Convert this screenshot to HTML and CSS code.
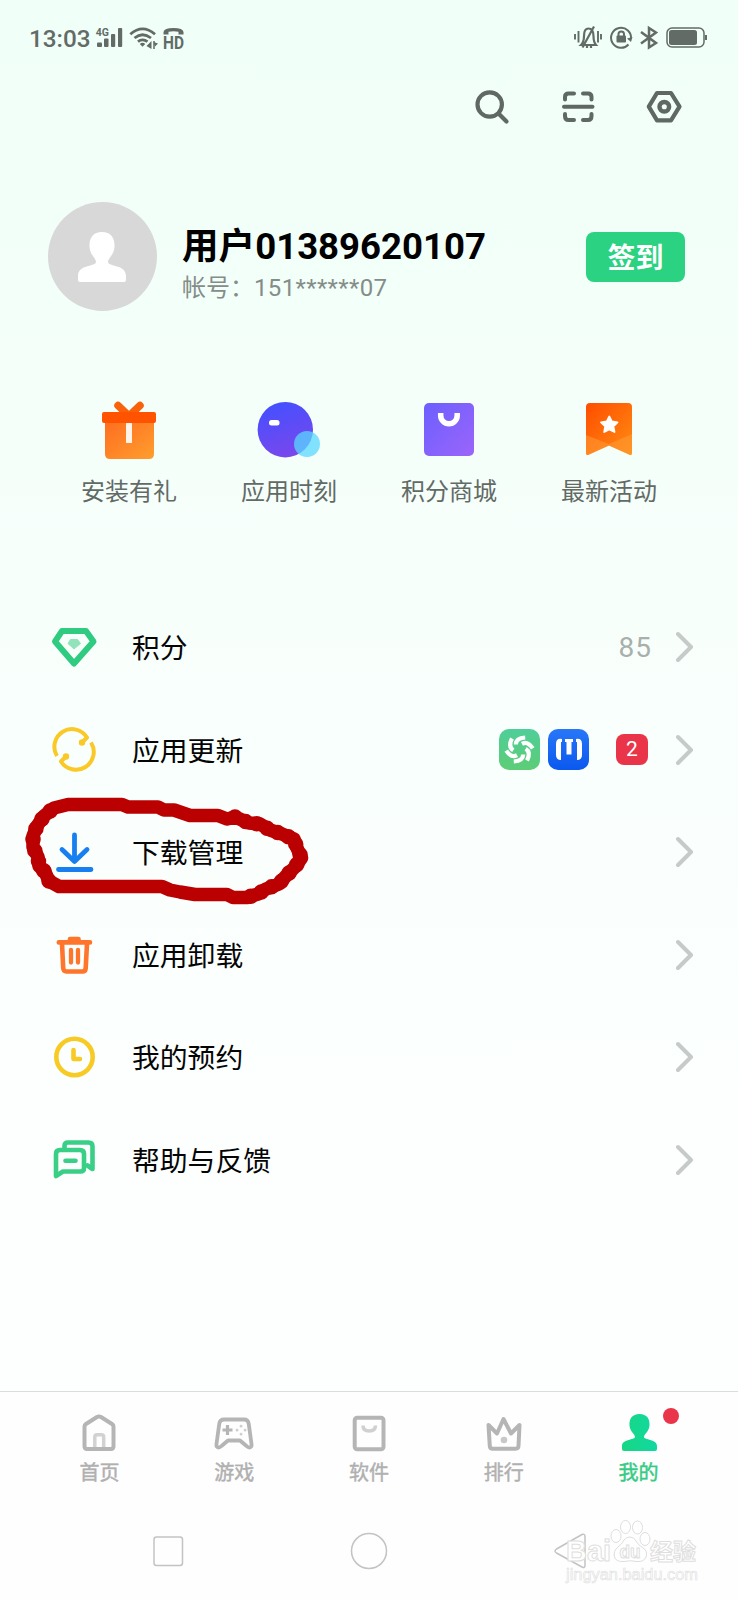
FILE: index.html
```html
<!DOCTYPE html>
<html lang="zh-CN">
<head>
<meta charset="utf-8">
<title>我的</title>
<link rel="stylesheet" href="styles.css">
</head>
<body>
<div class="screen">
  <header class="status">
    <div class="status-left">
      <span class="time">13:03</span>
      <svg class="signal" width="27" height="22" viewBox="96 27 27 22" fill="#626b66">
        <text x="95.7" y="35.500" class="tiny">4G</text>
        <rect x="97" y="42.5" width="5" height="4.5" rx="1"/><rect x="104" y="38.5" width="4.5" height="8.5" rx="1"/><rect x="111" y="34" width="4.200" height="13" rx="1"/><rect x="118" y="28" width="4.200" height="19" rx="1"/>
      </svg>
      <svg class="wifi" width="30" height="23" viewBox="129 27 30 23" fill="none" stroke="#626b66" stroke-width="2.8">
        <path d="M130.300 34.200Q142.500 23.500 155 34.200M134.500 38Q142.500 31.500 151 38M138 41.700Q142.500 38 147.500 41.700"/>
        <path d="M139.800 44Q142.500 41.500 145.300 44L142.500 46.700Z" fill="#626b66" stroke="none"/>
        <path d="M151.500 41V49L146.500 46ZM153.500 41V49M153.500 42L158 43.500L155 46.500Z" fill="#626b66" stroke="none"/><path d="M154 41V49" stroke-width="1.500"/>
      </svg>
      <svg class="volte" width="22" height="23" viewBox="163 26 22 23" fill="#626b66">
        <path d="M163.500 33.500V31Q164 27 173.500 27T183.500 31V33.500H178.500V30.800Q173.500 29.500 168.500 30.800V33.500Z"/>
        <text x="163" y="48" class="hd" textLength="21" lengthAdjust="spacingAndGlyphs">HD</text>
      </svg>
    </div>
    <svg width="136" height="26" viewBox="573 25 136 26" fill="none" stroke="#626b66" stroke-width="2">
      <path d="M575 34V39.500M578.500 31V42.500M598 31V42.500M601 34V39.500" stroke-width="1.900"/>
      <path d="M581 45Q584 42 584 36Q584 28.500 588.500 28.500Q593.500 28.500 593.500 36Q593.500 42 596 45ZM594 26.500L582.500 47.500M587 46V48M591 46V48" stroke-width="2.200"/>
      <path d="M628.500 44.500A10 10 0 1 1 631 39"/>
      <path d="M632.500 37L631 42L627 38.500Z" fill="#626b66" stroke="none"/>
      <rect x="616.500" y="35.500" width="9.500" height="7" rx="1" fill="#626b66" stroke="none"/><path d="M618.500 37V34Q618.500 31.500 621.200 31.500T624 34V37"/>
      <path d="M641 32L656 43L649 47.500V28L656 32.500L641 43.500" stroke-width="2.500"/>
      <rect x="667" y="28" width="37" height="19" rx="5" stroke-width="1.500"/><rect x="669" y="30" width="28" height="15" rx="2.500" fill="#626b66" stroke="none"/><path d="M706 35V40"/>
    </svg>
  </header>

  <div class="tools">
    <svg width="36" height="36" viewBox="474 88.500 36 36" fill="none" stroke="#606864" stroke-width="4.200" stroke-linecap="round"><circle cx="489.700" cy="104" r="12.200"/><path d="M498.500 113L506.500 121"/></svg>
    <svg width="36" height="36" viewBox="560 89 36 36" fill="none" stroke="#606864" stroke-width="4" stroke-linecap="round"><path d="M564 106.700H592.500"/><path d="M565 99.500V97Q565 93.500 568.500 93.500H574M583 93.500H588Q591.500 93.500 591.500 97V99.500M565 114V116Q565 120 568.500 120H574M583 120H588Q591.500 120 591.500 116V114"/></svg>
    <svg width="36" height="36" viewBox="646 89 36 36" fill="none" stroke="#606864" stroke-linejoin="round"><path d="M657 93H671L679.500 106.700L671 120.300H657L648.800 106.700Z" stroke-width="4.200"/><circle cx="664.300" cy="106.700" r="4.800" stroke-width="4.500"/></svg>
  </div>

  <section class="profile">
    <div class="avatar"><svg width="50" height="52" viewBox="0 0 50 52"><path fill="#fff" d="M25 1C34 1 38 7 37.500 16C37 24 31 27 31 31C31 36 49 33 49 45V49Q49 51 47 51H3Q1 51 1 49V45C1 33 19 36 19 31C19 27 13 24 12.500 16C12 7 16 1 25 1Z"/></svg></div>
    <div class="who">
      <div class="name">用户01389620107</div>
      <div class="account">帐号：<span class="digits">151******07</span></div>
    </div>
    <button class="checkin">签到</button>
  </section>

  <nav class="quick">
    <a class="quick-item">
      <svg width="64" height="60" viewBox="97 400 64 60">
        <defs><linearGradient id="gift" x1="0" y1="0" x2="1" y2="1"><stop stop-color="#ff6d20"/><stop offset="1" stop-color="#ff9e2e"/></linearGradient></defs>
        <path d="M118 405.500L129 416L140 405.500" fill="none" stroke="#fa610b" stroke-width="7.500" stroke-linecap="round" stroke-linejoin="round"/>
        <path d="M105 421H154V454Q154 459 149 459H110Q105 459 105 454Z" fill="url(#gift)"/><rect x="102" y="412" width="54" height="11" rx="2" fill="#ff5300"/><rect x="126" y="423" width="6" height="20" rx=".5" fill="#fff4e8"/>
      </svg><span>安装有礼</span></a>
    <a class="quick-item">
      <svg width="64" height="60" viewBox="257 400 64 60">
        <defs><linearGradient id="ball" x1=".3" y1="0" x2=".6" y2="1"><stop stop-color="#4450ff"/><stop offset="1" stop-color="#7a47ec"/></linearGradient></defs>
        <circle cx="285.300" cy="429.700" r="27.700" fill="url(#ball)"/><rect x="269" y="420" width="10.500" height="5.500" rx="2.500" fill="#fff"/><circle cx="307" cy="444" r="13" fill="#58d8ff" opacity=".75"/>
      </svg><span>应用时刻</span></a>
    <a class="quick-item">
      <svg width="64" height="60" viewBox="417 400 64 60">
        <defs><linearGradient id="bag" x1="0" y1="0" x2="1" y2="1"><stop stop-color="#6c5fff"/><stop offset="1" stop-color="#9b65fa"/></linearGradient></defs>
        <rect x="424" y="403" width="50" height="53" rx="5" fill="url(#bag)"/><path d="M440.700 413V415.500A8.200 8.200 0 0 0 457.200 415.500V413" fill="none" stroke="#fff" stroke-width="5.500"/>
      </svg><span>积分商城</span></a>
    <a class="quick-item">
      <svg width="64" height="60" viewBox="577 400 64 60">
        <defs><linearGradient id="ribbon" x1="0" y1="0" x2="1" y2="1"><stop stop-color="#ff4d00"/><stop offset="1" stop-color="#ff8c12"/></linearGradient></defs>
        <path d="M586 407Q586 403 590 403H628Q632 403 632 407V453Q632 456 629 454.500L609 445.500L589 454.500Q586 456 586 453Z" fill="url(#ribbon)"/><path d="M586 435L609 444L632 434V453Q632 456 629 454.500L609 445.500L589 454.500Q586 456 586 453Z" fill="#ffa03a" opacity=".5"/>
        <path d="M609.300 416.500L611.800 421.500L617.500 422.300L613.400 426.300L614.500 432L609.300 429.500L604.200 432L605.200 426.300L601 422.300L606.800 421.500Z" fill="#fff" stroke="#fff" stroke-width="1.800" stroke-linejoin="round"/>
      </svg><span>最新活动</span></a>
  </nav>

  <main class="list">
    <div class="row">
      <svg class="row-icon" viewBox="0 0 48 48" fill="none"><path d="M12 8H36L43.500 18.500L24 40.500L5 18.500Z" stroke="#2fcb81" stroke-width="6" stroke-linejoin="round"/><path d="M20.500 16.500H27.500L30.500 20.500L24 26L18 20.500Z" fill="#91e3bb" stroke="#91e3bb" stroke-linejoin="round"/></svg>
      <span class="label">积分</span><span class="points">85</span><svg class="chevron" viewBox="0 0 18 32"><path d="M2 3L15 16L2 29"/></svg>
    </div>
    <div class="row">
      <svg class="row-icon" viewBox="0 0 48 48" fill="none" stroke="#fac928" stroke-width="4"><path d="M7 30A17.500 17.500 0 0 1 37 11.500L31 17.500" stroke-linejoin="round"/><path d="M41 16.500A17.500 17.500 0 0 1 11 35.500L17 29.500" stroke-linejoin="round"/><circle cx="32" cy="16.500" r="1.700" stroke-width="3"/><circle cx="16" cy="30.500" r="1.700" stroke-width="3"/></svg>
      <span class="label">应用更新</span>
      <span class="apps">
        <svg width="41" height="41" viewBox="0 0 41 41"><defs><linearGradient id="green" x2="0" y2="1"><stop stop-color="#4fce99"/><stop offset="1" stop-color="#5dcd76"/></linearGradient><path id="blade" d="M-3.700 -5Q-3.500 -11.500 5.700 -12" fill="none" stroke="#fff" stroke-width="4.200"/></defs><rect width="41" height="41" rx="10" fill="url(#green)"/>
          <g transform="translate(20.500 20.500)"><use href="#blade"/><use href="#blade" transform="rotate(60)"/><use href="#blade" transform="rotate(120)"/><use href="#blade" transform="rotate(180)"/><use href="#blade" transform="rotate(240)"/><use href="#blade" transform="rotate(300)"/></g></svg>
        <svg width="41" height="41" viewBox="0 0 41 41"><defs><linearGradient id="blue" x2="0" y2="1"><stop stop-color="#2877f8"/><stop offset="1" stop-color="#0b58ee"/></linearGradient></defs><rect width="41" height="41" rx="10" fill="url(#blue)"/><path d="M14 10Q8 9 8 15V26Q8 31 13 31V13H14ZM17 10H25V13H23.500V25.500H18.500V13H17ZM28 10Q34 9 34 15V26Q34 31 29 31V13H28Z" fill="#fff"/></svg>
      </span>
      <span class="count">2</span><svg class="chevron" viewBox="0 0 18 32"><path d="M2 3L15 16L2 29"/></svg>
    </div>
    <div class="row marked">
      <svg class="row-icon" viewBox="0 0 48 48" fill="none" stroke="#187ff0" stroke-width="4.800" stroke-linecap="round" stroke-linejoin="round"><path d="M24.500 7V33M12 21.500L24.500 33.500L37 21.500M8.500 41.500H41"/></svg>
      <span class="label">下载管理</span><svg class="chevron" viewBox="0 0 18 32"><path d="M2 3L15 16L2 29"/></svg>
      <svg class="marker" width="300" height="120" viewBox="20 790 300 120" fill="none" stroke="#ba0000" stroke-linejoin="round" stroke-linecap="round"><path d="M68 804.500H122L128 807H158L164 810H174L190 815.500H218L227 819L235 817L249 823L260 824L270 830L282 834L294 839L297 848L301.500 858L295 867L286 876L279 884L266 889L258 894L247 897.500H233L227 894.500H195L180 892L170 890L162 886.500H59L49 881L45 872L39 866L38 857L33 847V836L37 826L44 816L54 808Z" stroke-width="13.500"/><path d="M235 817L249 823L260 824L270 830L282 834L294 839L297 848L301.500 858L295 867L286 876L279 884L266 889L258 894L247 897.500M49 881L45 872L39 866L38 857L33 847V836L37 826L44 816L54 808" stroke-width="15.500" stroke-dasharray="0 11.500"/></svg>
    </div>
    <div class="row">
      <svg class="row-icon" viewBox="0 0 48 48" fill="none" stroke="#ff752b" stroke-width="4.600" stroke-linecap="round" stroke-linejoin="round"><path d="M8.800 11.400H40M20 9.500V8H28.500V9.500M12 12.500L13.200 37Q13.400 40.500 16.500 40.500H32.500Q35.500 40.500 35.700 37L37 12.500"/><path d="M21 19V31.500M28 19V31.500" stroke-width="4.300"/></svg>
      <span class="label">应用卸载</span><svg class="chevron" viewBox="0 0 18 32"><path d="M2 3L15 16L2 29"/></svg>
    </div>
    <div class="row">
      <svg class="row-icon" viewBox="0 0 48 48" fill="none" stroke="#f8cb24" stroke-width="4.600" stroke-linecap="round" stroke-linejoin="round"><circle cx="24.500" cy="24" r="18.200"/><path d="M23.500 17V26H30"/></svg>
      <span class="label">我的预约</span><svg class="chevron" viewBox="0 0 18 32"><path d="M2 3L15 16L2 29"/></svg>
    </div>
    <div class="row">
      <svg class="row-icon" viewBox="0 0 48 48" fill="none" stroke="#39cf86" stroke-width="4.600" stroke-linecap="round" stroke-linejoin="round"><path d="M14.500 12V10Q14.500 6.500 18 6.500H38.500Q42.500 6.500 42.500 10.500V33L37.500 29.500"/><path d="M6 40V18Q6 14 10 14H30Q34 14 34 18V32Q34 35.500 30.500 35.500H13Z"/><path d="M15.500 24.700H25.500"/></svg>
      <span class="label">帮助与反馈</span><svg class="chevron" viewBox="0 0 18 32"><path d="M2 3L15 16L2 29"/></svg>
    </div>
  </main>

  <nav class="tabs">
    <a class="tab"><svg width="40" height="40" viewBox="0 0 40 40" fill="none" stroke="#b5b5b5" stroke-width="4" stroke-linejoin="round"><path d="M5.500 13.500Q5.500 12 7 11L18 4Q20 3 22 4L33 11Q34.500 12 34.500 13.500V33Q34.500 36 32 36H8Q5.500 36 5.500 33Z"/><path d="M15.800 34V24Q15.800 21.700 18 21.700H22.500Q24.700 21.700 24.700 24V34" stroke="#d2d2d2" stroke-width="3.500"/></svg><span>首页</span></a>
    <a class="tab"><svg width="40" height="40" viewBox="0 0 40 40" fill="none" stroke="#b5b5b5" stroke-width="3.800" stroke-linejoin="round"><path d="M10 6.500H30Q34 6.500 34.700 10.500L37.500 31Q38 34.500 35.500 34.500Q34 34.500 32.500 33L26 27.500H14L7.500 33Q6 34.500 4.500 34.500Q2 34.500 2.500 31L5.300 10.500Q6 6.500 10 6.500Z"/><path d="M13.500 12V22M8.500 17H18.500" stroke-width="3.200"/><path d="M27 13.200H27.100M27 21.200H27.100M23 17.200H23.100M31 17.200H31.100" stroke="#cfcfcf" stroke-width="2.800" stroke-linecap="round"/></svg><span>游戏</span></a>
    <a class="tab"><svg width="40" height="40" viewBox="0 0 40 40" fill="none" stroke="#b5b5b5" stroke-width="4"><rect x="5.700" y="4.700" width="28.800" height="31.500" rx="2.500"/><path d="M14 12.500Q14 18 20.200 18T26.500 12.500" stroke="#d0d0d0" stroke-width="3.500"/></svg><span>软件</span></a>
    <a class="tab"><svg width="40" height="40" viewBox="0 0 40 40" fill="none" stroke="#b5b5b5" stroke-width="4" stroke-linejoin="round"><path d="M4.500 12L13 20.500L19.500 6L27 20.500L35.500 12L34.500 33Q34.400 35.700 31.500 35.700H9Q6 35.700 5.800 33Z"/><circle cx="20" cy="27" r="3.300" fill="#c8c8c8" stroke="none"/></svg><span>排行</span></a>
    <a class="tab active"><svg width="40" height="40" viewBox="0 0 40 40"><defs><linearGradient id="me"><stop stop-color="#17d783"/><stop offset="1" stop-color="#11d8a2"/></linearGradient></defs><path fill="url(#me)" d="M20.500 1C28 1 31 6 30.500 12.500C30 19 25 21 25 24C25 27 38 26 38 33V36Q38 38 36 38H5Q3 38 3 36V33C3 26 16 27 16 24C16 21 11 19 10.500 12.500C10 6 13 1 20.500 1Z"/></svg><span>我的</span><i class="dot"></i></a>
  </nav>

  <footer class="system">
    <svg width="40" height="40" viewBox="0 0 40 40"><rect x="6" y="6" width="28.500" height="28.500" rx="2.500"/></svg>
    <svg width="40" height="40" viewBox="0 0 40 40"><circle cx="20" cy="20" r="17.500"/></svg>
    <svg width="40" height="40" viewBox="0 0 40 40"><path d="M6.500 18L32 3.500Q35 2.500 35 5.500V34.500Q35 37.500 32 36L6.500 22Q3.500 20 6.500 18Z"/></svg>
    <svg class="watermark" width="140" height="70" viewBox="563 1517 140 70">
      <text x="566" y="1561" class="wm-bai" textLength="45" lengthAdjust="spacingAndGlyphs">Bai</text>
      <g><ellipse cx="616" cy="1536" rx="5" ry="6.500"/><ellipse cx="625.500" cy="1527" rx="5" ry="6.500"/><ellipse cx="637.500" cy="1527.500" rx="5" ry="6.500"/><ellipse cx="645" cy="1539" rx="5" ry="6.500"/><path d="M630 1537Q634 1537 636 1541Q638 1545 643 1548Q648 1551 646 1557Q644 1562 637 1561.500Q630 1560 624 1561.500Q616 1562 614.500 1557Q613 1551 618 1547Q622 1544 624 1540Q626 1537 630 1537Z"/></g>
      <text x="619.500" y="1558" class="wm-du" textLength="21" lengthAdjust="spacingAndGlyphs">du</text>
      <text x="650" y="1560" class="wm-cn">经验</text>
      <text x="566" y="1580" class="wm-url" textLength="132" lengthAdjust="spacingAndGlyphs">jingyan.baidu.com</text>
    </svg>
  </footer>
</div>
</body>
</html>
```
FILE: styles.css
```css
* { box-sizing: border-box; }
body { margin: 0; font-family: Roboto, "Noto Sans CJK SC", sans-serif; }
svg { display: block; flex: none; }
.screen {
  width: 738px; height: 1600px; overflow: hidden;
  display: flex; flex-direction: column;
  background: linear-gradient(#f0fff8 0, #f3fff9 300px, #f9fffc 750px, #fdfffe 1250px, #fdfffe 1390px);
}
.status { height: 76px; padding: 0 29px 0 29px; display: flex; align-items: center; justify-content: space-between; }
.status-left { display: flex; align-items: center; }
.time { width: 67px; font-size: 24.3px; font-weight: 500; line-height: 28px; color: #626b66; padding-top: 2px; }
.signal { margin-right: 6px; overflow: visible; }
.wifi { margin-right: 4px; }
.volte { overflow: visible; }
.tiny { font: 700 10.500px Roboto, sans-serif; }
.hd { font: 700 17.500px Roboto, sans-serif; }
.tools { height: 62px; padding-right: 56px; display: flex; align-items: center; justify-content: flex-end; gap: 50px; }
.profile { height: 174px; margin-top: 32px; padding: 0 53px 0 48px; display: flex; align-items: flex-start; }
.avatar { width: 109px; height: 109px; margin-top: 32px; border-radius: 50%; background: #d8d8d8; display: grid; place-items: center; padding-right: 1px; }
.who { flex: 1; margin-left: 25px; padding-top: 53px; }
.name { font-size: 36.600px; font-weight: 700; line-height: 48px; color: #000; white-space: nowrap; }
.account { font-size: 24px; line-height: 34px; color: #858d89; white-space: nowrap; }
.digits { letter-spacing: .35px; }
.checkin { width: 99px; height: 50px; margin-top: 62px; padding: 0 0 1px; border: 0; border-radius: 8px; background: #2bd282; color: #fff; font: 700 28px/49px "Noto Sans CJK SC", sans-serif; }
.quick { height: 180px; padding: 56px 49px 0; display: grid; grid-template-columns: repeat(4, 160px); }
.quick-item { display: flex; flex-direction: column; align-items: center; gap: 14px; font-size: 24px; line-height: 36px; color: #626a66; }
.list { margin-top: 72px; height: 795px; display: flex; flex-direction: column; }
.row { position: relative; height: 102.500px; flex: none; padding: 0 44px 0 50px; display: flex; align-items: center; }
.row-icon { width: 48px; height: 48px; }
.label { margin-left: 34px; flex: 1; font-size: 27.800px; line-height: 40px; color: #050505; padding-top: 4px; }
.chevron { width: 18px; height: 32px; fill: none; stroke: #c6cac8; stroke-width: 4; stroke-linecap: round; stroke-linejoin: round; }
.points { font-size: 28px; letter-spacing: 1px; color: #a9afac; margin-right: 24px; }
.apps { display: flex; gap: 8px; margin-right: 27px; }
.count { width: 32px; height: 31px; border-radius: 8px; background: #e93449; color: #fff; font-size: 21px; line-height: 31px; text-align: center; margin-right: 28px; }
.marker { position: absolute; left: 20px; top: -11px; }
.tabs { height: 104px; border-top: 1px solid #d9dddb; background: #fefefe; padding: 21px 32px 0; display: grid; grid-template-columns: repeat(5, 134.800px); }
.tab { position: relative; display: flex; flex-direction: column; align-items: center; gap: 5px; font-size: 20px; line-height: 30px; color: #b0b0b0; -webkit-text-stroke: .45px currentColor; }
.active { color: #35cb84; }
.dot { position: absolute; width: 16px; height: 16px; border-radius: 50%; background: #e93449; left: 92px; top: -5px; }
.system { position: relative; flex: 1; padding: 36px 148px 0 148px; display: flex; justify-content: space-between; background: #fefefe; fill: none; stroke: #c3c3c3; stroke-width: 1.500px; }
.watermark { position: absolute; left: 563px; top: 22px; fill: #fff; stroke: #dedede; stroke-width: 1; }
.wm-bai { font: 700 29px "Liberation Sans", sans-serif; }
.wm-du { font: 700 18px "Liberation Sans", sans-serif; }
.wm-cn { font: 700 23px "Noto Sans CJK SC", sans-serif; }
.wm-url { font: 400 16px "Liberation Sans", sans-serif; stroke-width: .6; }
```
